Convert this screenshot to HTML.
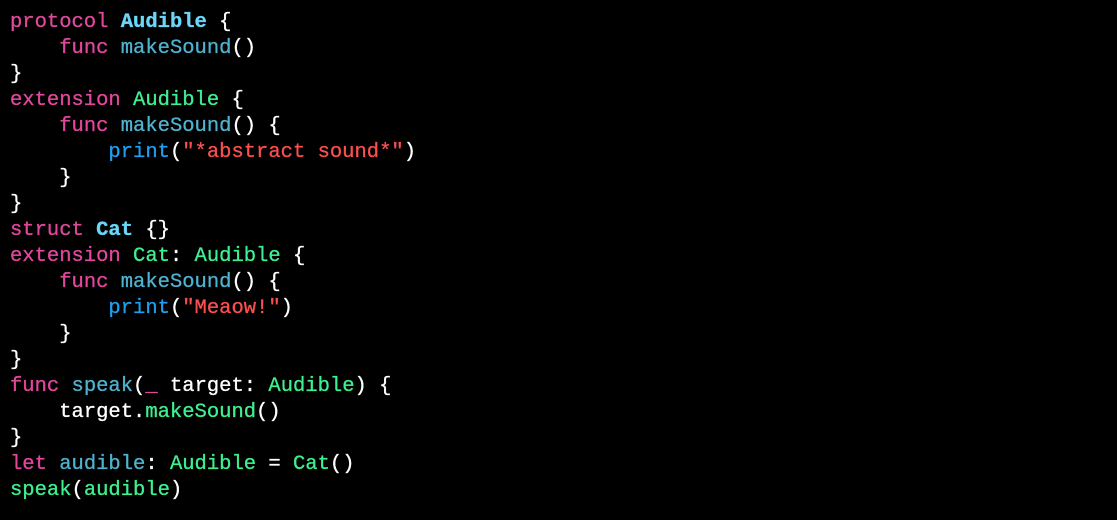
<!DOCTYPE html>
<html><head><meta charset="utf-8"><style>
html,body{margin:0;padding:0;background:#000;width:1117px;height:520px;overflow:hidden}
pre{margin:0;position:absolute;left:10px;top:10px;font-family:"Liberation Mono",monospace;font-size:20.5px;line-height:26px;color:#fff;-webkit-text-stroke:0.3px currentColor}
.k{color:#e2479c}.t{color:#6bd6f8;font-weight:bold}.g{color:#3ef090}.m{color:#4fb2cf}.p{color:#1e9ff0}.s{color:#fb4f4f}
</style></head><body><pre><span class="k">protocol</span> <span class="t">Audible</span> {
    <span class="k">func</span> <span class="m">makeSound</span>()
}
<span class="k">extension</span> <span class="g">Audible</span> {
    <span class="k">func</span> <span class="m">makeSound</span>() {
        <span class="p">print</span>(<span class="s">"*abstract sound*"</span>)
    }
}
<span class="k">struct</span> <span class="t">Cat</span> {}
<span class="k">extension</span> <span class="g">Cat</span>: <span class="g">Audible</span> {
    <span class="k">func</span> <span class="m">makeSound</span>() {
        <span class="p">print</span>(<span class="s">"Meaow!"</span>)
    }
}
<span class="k">func</span> <span class="m">speak</span>(<span class="k">_</span> target: <span class="g">Audible</span>) {
    target.<span class="g">makeSound</span>()
}
<span class="k">let</span> <span class="m">audible</span>: <span class="g">Audible</span> = <span class="g">Cat</span>()
<span class="g">speak</span>(<span class="g">audible</span>)</pre></body></html>
